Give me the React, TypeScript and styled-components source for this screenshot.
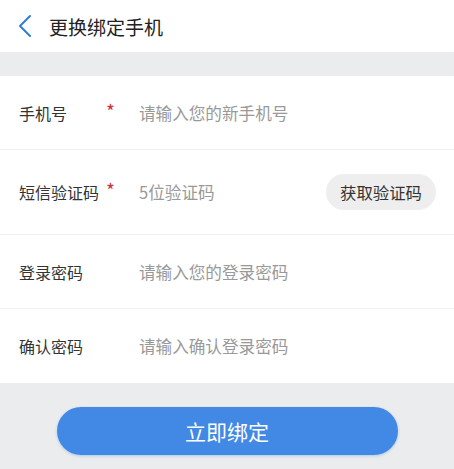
import React from "react"
import styled, { createGlobalStyle } from "styled-components"

const GlobalStyle = createGlobalStyle`
  html, body {
    margin: 0;
    padding: 0;
    background: #ebeced;
    font-family: "Noto Sans CJK SC", "Noto Sans", sans-serif;
  }
  * {
    box-sizing: border-box;
  }
`

const Page = styled.div`
  display: flex;
  flex-direction: column;
  width: 454px;
  height: 469px;
  background: #ebeced;
`

const Header = styled.div`
  display: flex;
  align-items: center;
  height: 52px;
  padding-left: 17px;
  background: #ffffff;
  gap: 16px;
`

const BackIcon = styled.svg`
  width: 16px;
  height: 24px;
  color: #2f7ed6;
`

const Title = styled.h1`
  margin: 0;
  font-size: 19px;
  font-weight: 400;
  color: #222;
  line-height: 1;
`

const Form = styled.div`
  display: flex;
  flex-direction: column;
  margin-top: 24px;
  background: #ffffff;
`

const Row = styled.div<{ $tall?: boolean; $last?: boolean }>`
  display: flex;
  align-items: center;
  height: ${(p) => (p.$tall ? 85 : 74)}px;
  padding: 0 18px 0 19px;
  border-bottom: ${(p) => (p.$last ? "none" : "1px solid #f0f0f0")};
`

const Label = styled.div`
  display: flex;
  align-items: flex-start;
  width: 120px;
  font-size: 16px;
  color: #333;
`

const LabelText = styled.span`
  width: 87px;
`

const Star = styled.span`
  color: #c8343a;
  font-size: 19px;
  line-height: 1;
  margin-top: 0;
`

const Input = styled.input`
  flex: 1;
  min-width: 0;
  border: none;
  outline: none;
  padding: 0;
  background: transparent;
  font-family: inherit;
  font-size: 16.6px;
  color: #333;

  &::placeholder {
    color: #999;
  }
`

const CodeButton = styled.button`
  width: 110px;
  height: 36px;
  border: none;
  border-radius: 18px;
  background: #eeeeee;
  font-family: inherit;
  font-size: 16.4px;
  color: #333;
  padding: 0;
`

const Footer = styled.div`
  display: flex;
  justify-content: center;
  padding-top: 24px;
`

const SubmitButton = styled.button`
  width: 341px;
  height: 48px;
  border: none;
  border-radius: 24px;
  background: #4189e5;
  box-shadow: 0 1px 3px rgba(65, 137, 229, 0.35);
  color: #ffffff;
  font-family: inherit;
  font-size: 21px;
  padding: 0;
`

const fields = [
  { label: "手机号", required: true, placeholder: "请输入您的新手机号" },
  { label: "短信验证码", required: true, placeholder: "5位验证码", code: true },
  { label: "登录密码", placeholder: "请输入您的登录密码", type: "password" },
  { label: "确认密码", placeholder: "请输入确认登录密码", type: "password" },
]

export default function App() {
  return (
    <Page>
      <GlobalStyle />
      <Header>
        <BackIcon viewBox="0 0 16 24" fill="none" stroke="currentColor">
          <path d="M13 2L3 12L13 22" strokeWidth="2" strokeLinecap="round" strokeLinejoin="round" />
        </BackIcon>
        <Title>更换绑定手机</Title>
      </Header>
      <Form>
        {fields.map((f, i) => (
          <Row key={f.label} $tall={f.code} $last={i === fields.length - 1}>
            <Label>
              <LabelText>{f.label}</LabelText>
              {f.required && <Star>*</Star>}
            </Label>
            <Input type={f.type ?? "text"} placeholder={f.placeholder} />
            {f.code && <CodeButton>获取验证码</CodeButton>}
          </Row>
        ))}
      </Form>
      <Footer>
        <SubmitButton>立即绑定</SubmitButton>
      </Footer>
    </Page>
  )
}
